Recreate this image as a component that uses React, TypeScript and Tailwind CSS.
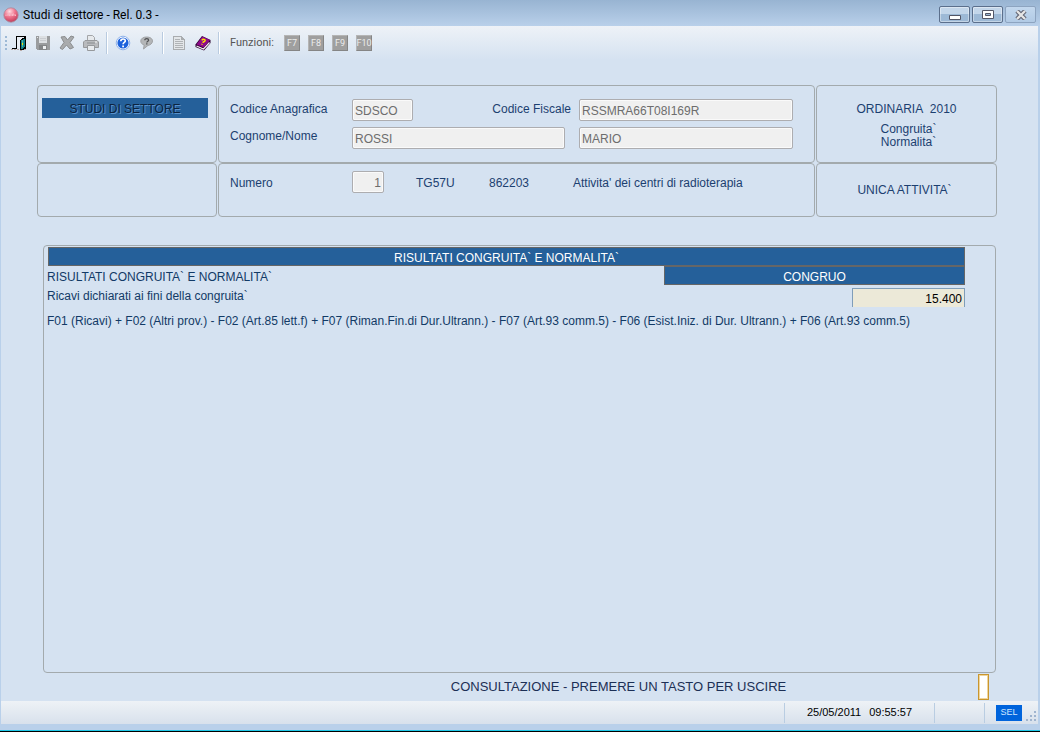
import React from 'react'

interface ToolButtonProps {
  label: string
  disabled?: boolean
  children: React.ReactNode
}

function ToolButton({ label, disabled = false, children }: ToolButtonProps) {
  return (
    <button type="button" aria-label={label} disabled={disabled} className="flex w-6 h-6 items-center justify-center">
      {children}
    </button>
  )
}

const Separator = () => <div className="mx-[3px] h-[22px] w-[2px] border-l border-r border-l-[#b9cbe0] border-r-white" />

// Toolbar icons
const ExitIcon = () => (
  <svg width="16" height="16" viewBox="0 0 16 16" shapeRendering="crispEdges">
    <path d="M0 14h2v1H0zM3 14h2v1H3zM6 14h2v1H6zM9 15h2v1H9zM13 14h2v1h-2z" fill="#b9aaa6" />
    <path d="M6 2h6v11H6z" fill="#e9eef4" />
    <path d="M10 4h4v10h-4z" fill="#0f7f83" />
    <path d="M11 5h1v7h-1z" fill="#49aeb0" />
    <path d="M5 1h10v13h-1V2H6v12H1v-1h4z" fill="#000" />
    <path d="M9 5h1V4h1V3h2V2h1v2h-2v1h-2v9h1v1H9zM11 14h1v-1h1v-1h1v2h-1v1h-2z" fill="#000" />
    <path d="M11 8h1v2h-1z" fill="#f0e600" />
  </svg>
)

const SaveIcon = () => (
  <svg width="14" height="14" viewBox="0 0 14 14" shapeRendering="crispEdges">
    <path d="M0 0h14v14H1v-1H0z" fill="#9a9c9e" />
    <path d="M3 0h8v7H3z" fill="#dcdfe2" />
    <path d="M4 2h6v1H4zM4 4h6v1H4z" fill="#c9ccd0" />
    <path d="M1 1h1v1H1z" fill="#e4e6e9" />
    <path d="M3 9h8v5H3z" fill="#838587" />
    <path d="M7 10h3v3H7z" fill="#eef0f2" />
  </svg>
)

const DeleteIcon = () => (
  <svg width="16" height="16" viewBox="0 0 16 16">
    <path d="M2 2l4-.5 2.500 3.500 3.500-4 3 1-4 5.500 3.500 5-3.500 1.500-3.500-4-4 4.500-2.500-1.500 4-5.500z" fill="#a9abad" stroke="#8b8d8f" strokeLinejoin="round" />
  </svg>
)

const PrintIcon = () => (
  <svg width="16" height="16" viewBox="0 0 16 16">
    <path d="M4.500.5h5l2 2V7h-7z" fill="#e6e9ec" stroke="#a3a5a8" />
    <path d="M2 5.500h12l1.500 1.500v5.500H.5V7z" fill="#b9bbbe" stroke="#97999c" />
    <path d="M4.500 10.500h7v5h-7z" fill="#e8ebee" stroke="#96999c" />
    <path d="M4 8h8" stroke="#8b8e91" />
    <path d="M12 7h2" stroke="#f5f5f5" />
  </svg>
)

const HelpIcon = () => (
  <svg width="16" height="16" viewBox="0 0 16 16">
    <circle cx="8" cy="8" r="6.800" fill="#fff" stroke="#8fb2ea" />
    <circle cx="8" cy="8" r="5.600" fill="#1d62dc" />
    <path d="M5.800 6.300c0-3 4.500-3 4.500-.4 0 1.500-2.200 1.500-2.200 3.300" fill="none" stroke="#fff" strokeWidth="1.700" />
    <path d="M7.200 10.500h1.800v1.700H7.200z" fill="#fff" />
  </svg>
)

const TipIcon = () => (
  <svg width="14" height="14" viewBox="0 0 14 14">
    <path d="M6.500 1c3.500 0 6 1.500 6 4S10 9.200 8 9.400L3.500 13l.7-4C2 8.300.8 7 .8 5 .8 2.500 3.500 1 6.500 1z" fill="#b4b6b8" stroke="#a0a2a5" />
    <path d="M4.800 4.200c0-2.200 3.800-2 3.800 0 0 1-1.800 1-1.800 2.300M6.800 7.200v1.200" fill="none" stroke="#4f5153" strokeWidth="1.300" />
  </svg>
)

const DocIcon = () => (
  <svg width="12" height="14" viewBox="0 0 12 14" shapeRendering="crispEdges">
    <path d="M0 0h9v1h1v1h1v1h1v11H0z" fill="#a9acaf" />
    <path d="M1 1h7v3h3v9H1z" fill="#e3e6e9" />
    <path d="M2 3h5v1H2zM2 5h8v1H2zM2 7h8v1H2zM2 9h8v1H2zM2 11h8v1H2z" fill="#b0b3b6" />
  </svg>
)

const BookIcon = () => (
  <svg width="16" height="16" viewBox="0 0 16 16">
    <path d="M.5 9.500L7 1l8.500 4v3L9 15.500.5 12z" fill="#2c0030" />
    <path d="M1.500 11l7 3 6-6.500" fill="none" stroke="#f6e9ef" strokeWidth="1.300" />
    <path d="M1.500 9.500L7.300 1.500 15 5l-6.200 7.500z" fill="#8f0a8a" />
    <path d="M6.800 5.300c1.200-1.800 4-.7 3.200.7-.5.900-1.800.6-2.200 1.700M7.200 8.800l-.5.900" fill="none" stroke="#ffe000" strokeWidth="1.500" />
  </svg>
)

const AppIcon = () => (
  <svg width="16" height="16" viewBox="0 0 16 16">
    <defs>
      <radialGradient id="ball" cx="40%" cy="25%" r="75%">
        <stop offset="0" stopColor="#ffdbe2" />
        <stop offset="0.500" stopColor="#f0768f" />
        <stop offset="1" stopColor="#c23d5c" />
      </radialGradient>
    </defs>
    <circle cx="8" cy="8" r="7.200" fill="url(#ball)" stroke="#a98a9c" strokeWidth="0.800" />
    <path d="M3 9V7.500M5 9V7h1.500v2M8 9V7M9.500 9V7H11v2M12.500 9V7.500" fill="none" stroke="#f8b6c4" />
  </svg>
)

function TitleBar() {
  const button = 'flex h-[17px] w-[31px] items-center justify-center rounded-[2px] border border-[#5b6f8c] bg-linear-to-b from-[#c3d6ea] from-50% to-[#9db9d6] to-50% shadow-[inset_0_0_0_1px_rgba(255,255,255,0.4)]'
  return (
    <header className="flex h-[26px] items-center bg-linear-to-b from-[#98b4d2] to-[#b9d0ea] pl-[3px] pr-1 pt-[3px]">
      <AppIcon />
      <h1 className="ml-1 font-['Roboto',sans-serif] text-[12px] leading-4 text-black">Studi di settore - Rel. 0.3 -</h1>
      <div className="ml-auto flex gap-[2px]">
        <button type="button" aria-label="Riduci a icona" className={button}>
          <svg className="mt-1" width="12" height="9" viewBox="0 0 12 9"><path d="M.5 3.500h11v4H.5z" fill="#fff" stroke="#535666" /></svg>
        </button>
        <button type="button" aria-label="Ingrandisci" className={button}>
          <svg width="12" height="9" viewBox="0 0 12 9">
            <path d="M.5.5h11v8H.5z" fill="#fff" stroke="#535666" />
            <path d="M3.500 3.500h5v2h-5z" fill="#9db9d6" stroke="#535666" />
          </svg>
        </button>
        <button type="button" aria-label="Chiudi" className="flex h-[17px] w-[31px] items-center justify-center rounded-[2px] border border-[#8da4c0] bg-linear-to-b from-[#c3d8ee] to-[#b1cae5]">
          <svg width="12" height="10" viewBox="0 0 12 10">
            <path d="M2 1l8 8M10 1L2 9" stroke="#626473" strokeWidth="4.500" />
            <path d="M2 1l8 8M10 1L2 9" stroke="#e6e6e6" strokeWidth="2.400" />
          </svg>
        </button>
      </div>
    </header>
  )
}

const functionKeys = ['F7', 'F8', 'F9', 'F10']

function Toolbar() {
  return (
    <div className="flex h-[34px] items-center bg-linear-to-b from-[#eef2f7] to-[#d5e2f1] pl-1">
      <div className="h-[14px] w-[2px] border-l-2 border-dotted border-[#9db9d6]" />
      <ToolButton label="Esci"><ExitIcon /></ToolButton>
      <ToolButton label="Salva" disabled><SaveIcon /></ToolButton>
      <ToolButton label="Elimina" disabled><DeleteIcon /></ToolButton>
      <ToolButton label="Stampa" disabled><PrintIcon /></ToolButton>
      <Separator />
      <ToolButton label="Guida"><HelpIcon /></ToolButton>
      <ToolButton label="Suggerimento" disabled><TipIcon /></ToolButton>
      <Separator />
      <ToolButton label="Documento" disabled><DocIcon /></ToolButton>
      <ToolButton label="Manuale"><BookIcon /></ToolButton>
      <Separator />
      <span className="ml-[7px] w-[50px] font-['Roboto',sans-serif] text-[11px] text-[#555]">Funzioni:</span>
      {functionKeys.map((key) => (
        <button key={key} type="button" disabled className="mx-1 flex size-4 items-center justify-center border border-t-[#b5b5b5] border-l-[#b5b5b5] border-r-[#858585] border-b-[#858585] bg-[#9f9f9f] font-['Roboto',sans-serif] text-[9px] leading-none text-[#ececec]">
          {key}
        </button>
      ))}
    </div>
  )
}

function Field({ id, value, className = '' }: { id: string; value: string; className?: string }) {
  return (
    <input
      id={id}
      defaultValue={value}
      readOnly
      className={`h-[22px] min-w-0 rounded-[2px] border border-[#adadb0] bg-[#f0f0f0] px-[2px] pt-px text-[12px] text-[#6d6d6d] shadow-[inset_0_0_0_1px_#fafafa] ${className}`}
    />
  )
}

const panel = 'rounded-[4px] border border-[#a3aaad]'

function Summary() {
  return (
    <section className="ml-9 mr-[41px] grid grid-cols-[180px_minmax(0,1fr)_181px] grid-rows-[78px_54px] gap-x-px text-[12px] leading-4 text-[#1c3f70]">
      <div className={`${panel} px-1 pt-3`}>
        <div className="mr-1 h-5 bg-[#25609a] pt-[3px] text-center text-[#0d2440] [text-shadow:1px_1px_0_#5a92cc]">STUDI DI SETTORE</div>
      </div>

      <div className={`${panel} grid grid-cols-[122px_minmax(0,1fr)_214px] content-start gap-y-[6px] pl-[11px] pr-[21px] pt-[13px]`}>
        <label htmlFor="codice" className="pt-[2px]">Codice Anagrafica</label>
        <div className="flex justify-between pr-2">
          <Field id="codice" value="SDSCO" className="w-[61px]" />
          <label htmlFor="fiscale" className="pt-[2px]">Codice Fiscale</label>
        </div>
        <Field id="fiscale" value="RSSMRA66T08I169R" />
        <label htmlFor="cognome" className="pt-px">Cognome/Nome</label>
        <div className="flex pr-[14px]">
          <Field id="cognome" value="ROSSI" className="w-full" />
        </div>
        <Field id="nome" value="MARIO" />
      </div>

      <div className={`${panel} pt-[15px] text-center`}>
        <p>ORDINARIA&nbsp; 2010</p>
        <p className="mt-[6px] whitespace-pre-line pl-1 leading-[13px]">{'Congruita`\nNormalita`'}</p>
      </div>

      <div className={panel} />

      <div className={`${panel} flex items-start pl-[11px] pt-[7px]`}>
        <label htmlFor="numero" className="w-[122px] pt-1">Numero</label>
        <Field id="numero" value="1" className="mr-8 w-8 text-right" />
        <span className="w-[73px] pt-1">TG57U</span>
        <span className="w-[84px] pt-1">862203</span>
        <span className="pt-1">Attivita&apos; dei centri di radioterapia</span>
      </div>

      <div className={`${panel} flex items-center justify-center pr-1`}>UNICA ATTIVITA`</div>
    </section>
  )
}

function Results() {
  return (
    <section className={`${panel} ml-[42px] mr-[42px] mt-7 flex-1 pl-[3px] pr-[30px] pt-px text-[12px] leading-4 text-[#123a66]`}>
      <h2 className="ml-px h-[19px] border border-[#666] bg-[#25609a] pt-[2px] text-center text-white">RISULTATI CONGRUITA` E NORMALITA`</h2>
      <div className="flex">
        <span className="flex-1 pt-[3px]">RISULTATI CONGRUITA` E NORMALITA`</span>
        <strong className="h-[19px] w-[301px] border border-[#666] bg-[#25609a] pt-[2px] text-center font-normal text-white">CONGRUO</strong>
      </div>
      <div className="flex justify-between">
        <label htmlFor="ricavi" className="pt-[3px]">Ricavi dichiarati ai fini della congruita`</label>
        <input
          id="ricavi"
          defaultValue="15.400"
          readOnly
          className="mt-[3px] h-[19px] w-[113px] border border-b-0 border-[#7f9db9] bg-[#ece9d8] pr-[2px] pt-px text-right text-black"
        />
      </div>
      <p className="mt-[6px]">F01 (Ricavi) + F02 (Altri prov.) - F02 (Art.85 lett.f) + F07 (Riman.Fin.di Dur.Ultrann.) - F07 (Art.93 comm.5) - F06 (Esist.Iniz. di Dur. Ultrann.) + F06 (Art.93 comm.5)</p>
    </section>
  )
}

function StatusBar() {
  return (
    <footer className="flex h-[23px] items-center justify-end bg-linear-to-b from-[#eef2f6] to-[#d8e1ec] text-[11px] text-black">
      <div className="flex h-5 w-[150px] items-center justify-center gap-2 border-l border-[#b9cde2]">
        <span>25/05/2011</span>
        <span>09:55:57</span>
      </div>
      <div className="h-5 w-[50px] border-l border-[#b9cde2]" />
      <div className="flex h-5 w-[54px] items-center border-l border-[#b9cde2] pl-[11px]">
        <span className="flex h-4 w-[26px] items-center justify-center bg-[#0064dc] text-[9px] text-[#cfe6ff]">SEL</span>
        <svg className="ml-1 mt-2" width="11" height="11" viewBox="0 0 11 11" shapeRendering="crispEdges" fill="#9fb4cf">
          <path d="M8 0h2v2H8zM8 4h2v2H8zM4 4h2v2H4zM8 8h2v2H8zM4 8h2v2H4zM0 8h2v2H0z" />
        </svg>
      </div>
    </footer>
  )
}

export default function App() {
  return (
    <div className="flex min-h-screen flex-col border-b border-black bg-[#b9d0ea] font-['Liberation_Sans',Arial,sans-serif]">
      <TitleBar />
      <div className="ml-px mr-[2px] flex flex-1 flex-col bg-[#d5e2f1]">
        <Toolbar />
        <main className="flex flex-1 flex-col pt-[25px]">
          <Summary />
          <Results />
          <div className="flex h-7 items-center pl-[258px] pr-[49px] text-[13px] text-[#1c2f55]">
            <p className="flex-1 text-center">CONSULTAZIONE - PREMERE UN TASTO PER USCIRE</p>
            <input aria-label="Tasto" className="h-[26px] w-[11px] border border-[#c9962f] bg-white shadow-[inset_0_0_0_1px_#f0d59c]" />
          </div>
        </main>
        <StatusBar />
      </div>
      <div className="h-[7px] border-b border-[#1fc8e8]" />
    </div>
  )
}
